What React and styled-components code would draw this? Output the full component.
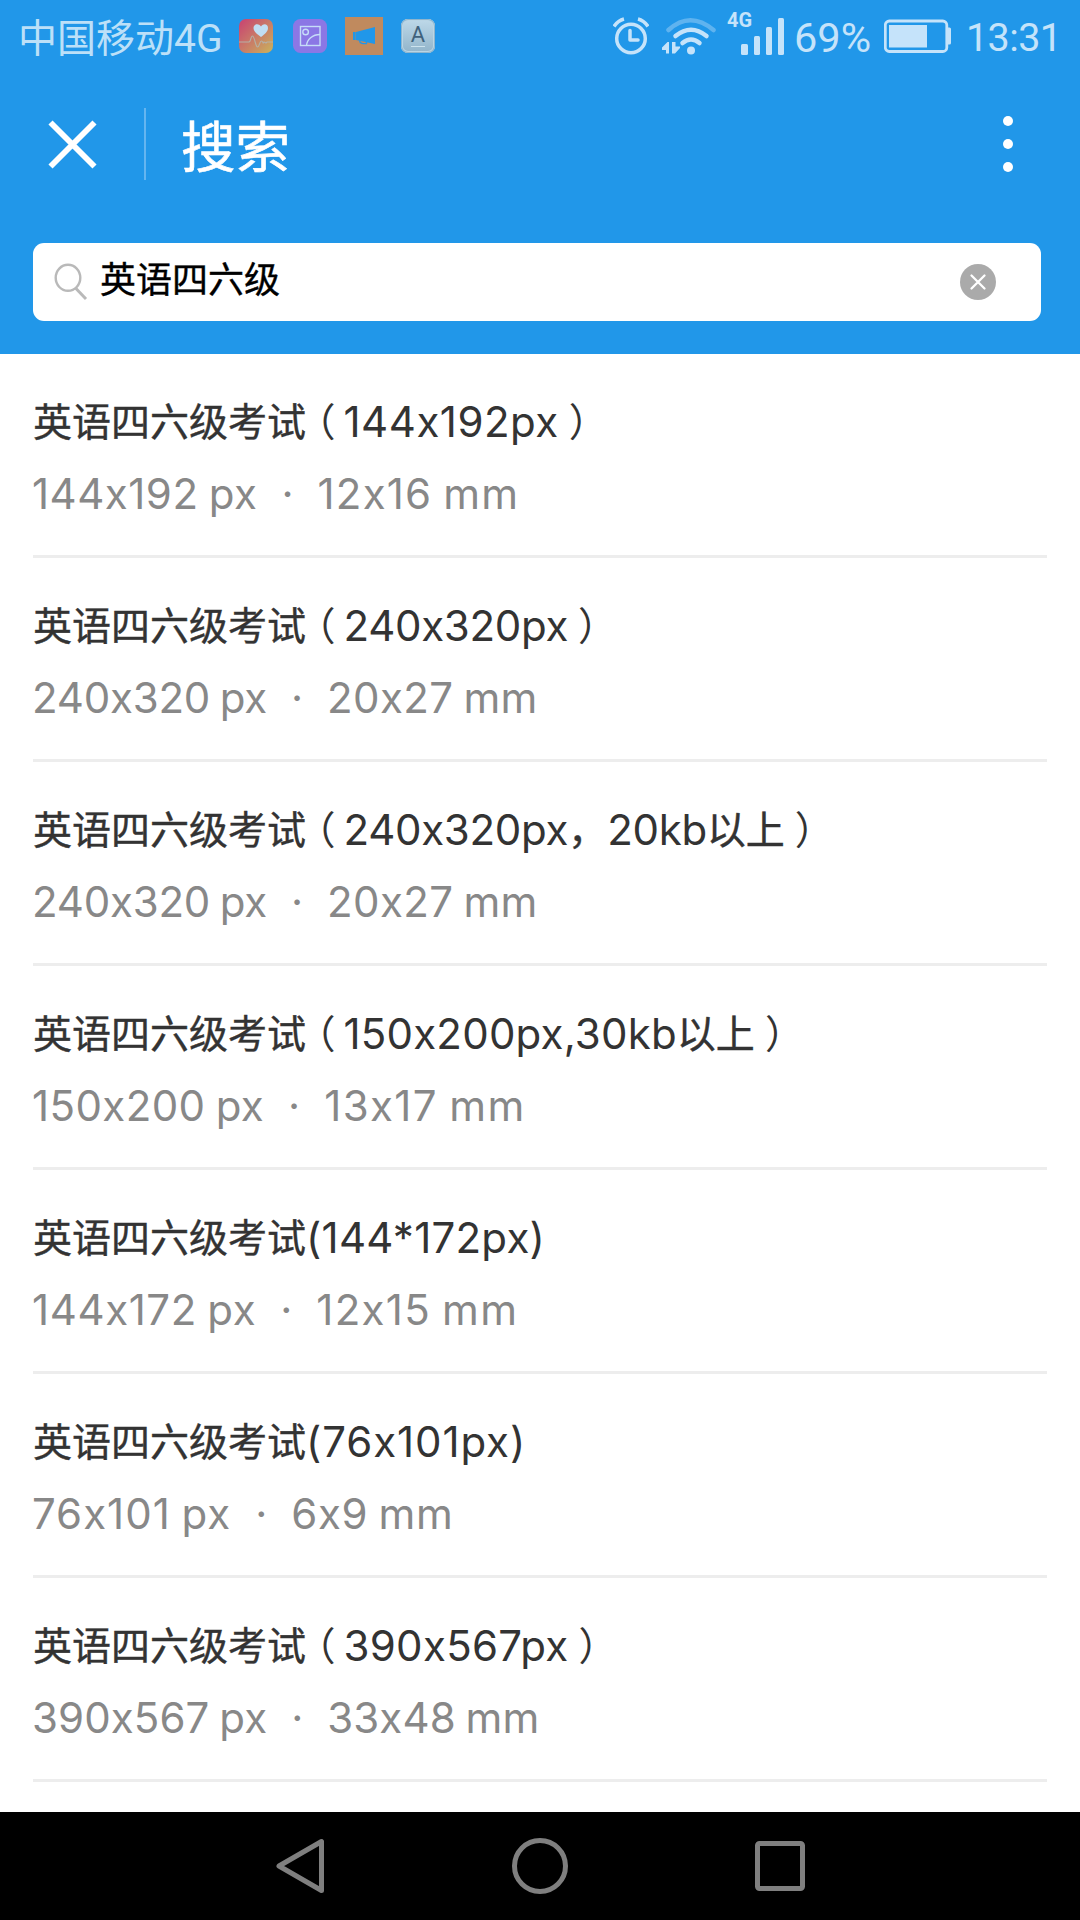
import React from 'react';
import styled, { createGlobalStyle } from 'styled-components';

const cjk = '"Noto Sans CJK SC", sans-serif';
const blue = '#2197e9';

const GlobalStyle = createGlobalStyle`
  * { box-sizing: border-box; }
  body { margin: 0; background: #fdfdfd; font-family: Roboto, ${cjk}; }
`;

const Screen = styled.div`
  width: 1080px;
  height: 1920px;
  display: flex;
  flex-direction: column;
  overflow: hidden;
  background: #fff;
`;

const Header = styled.header`
  flex: none;
  height: 354px;
  background: ${blue};
`;

const StatusBar = styled.div`
  height: 72px;
  display: flex;
  justify-content: space-between;
  padding: 0 21px 0 18px;
  color: #c5e3fa;
`;

const StatusGroup = styled.div`
  display: flex;
  align-items: center;
  height: 72px;
`;

const Carrier = styled.span`
  width: 221px;
  font-size: 39px;
  line-height: 72px;
  padding-top: 5px;
  white-space: nowrap;
  color: #bce0f8;
`;

const StatusText = styled.span`
  width: ${(p) => p.$width}px;
  font-size: ${(p) => p.$size}px;
  line-height: 72px;
  padding-top: 3px;
  white-space: nowrap;
  letter-spacing: ${(p) => p.$spacing || 0}px;
`;

const Glyph = styled.svg`
  display: block;
  flex: none;
  margin-right: ${(p) => p.$after || 0}px;
`;

const Signal = styled.div`
  display: flex;
  align-items: flex-start;
  width: 67px;
  height: 72px;
  padding-top: 10px;
`;

const NetworkType = styled.span`
  width: 14px;
  font-size: 20px;
  font-weight: 700;
  line-height: 20px;
  white-space: nowrap;
`;

const BarsSlot = styled.span`
  padding-top: 8px;
`;

const TitleBar = styled.div`
  height: 144px;
  display: flex;
  align-items: center;
  padding: 0 63px 0 48px;
`;

const Divider = styled.div`
  width: 2px;
  height: 72px;
  margin: 0 35px 0 47px;
  background: #64b5f0;
`;

const PageTitle = styled.h1`
  flex: 1;
  margin: 0;
  font: 400 54.5px/72px ${cjk};
  -webkit-text-stroke: 0.6px #fff;
  color: #fff;
`;

const SearchBox = styled.div`
  display: flex;
  align-items: center;
  width: 1008px;
  height: 78px;
  margin: 27px 0 0 33px;
  padding: 0 45px 0 21px;
  border-radius: 11px;
  background: #fff;
`;

const Query = styled.span`
  flex: 1;
  padding: 0 0 11px 12px;
  font: 400 36px/60px ${cjk};
  -webkit-text-stroke: 0.4px #000;
  color: #000;
`;

const List = styled.ul`
  flex: 1;
  margin: 0;
  padding: 0 33px;
  list-style: none;
  overflow: hidden;
`;

const Item = styled.li`
  height: 204px;
  padding-top: 29px;
  border-bottom: 3px solid #ededed;
`;

const Name = styled.div`
  height: 75px;
  font: 400 39px/72px ${cjk};
  color: #333;
  white-space: nowrap;
`;

const Han = styled.span`
  vertical-align: 1px;
  -webkit-text-stroke: 0.4px #333;
`;

const Latin = styled.span`
  font-family: Inter, sans-serif;
  font-size: 42px;
  font-feature-settings: 'calt' 0;
  letter-spacing: ${(p) => p.$spacing}px;
`;

const OpenParen = styled.span`
  margin: 0 8px 0 10px;
  font-feature-settings: 'halt' 1;
  vertical-align: 1px;
`;

const CloseParen = styled.span`
  margin-left: 10px;
  font-feature-settings: 'halt' 1;
  vertical-align: 1px;
`;

const Size = styled.div`
  display: flex;
  height: 72px;
  margin-left: -1px;
  font: 400 42px/72px Inter, sans-serif;
  font-feature-settings: 'calt' 0;
  word-spacing: -2px;
  color: #888;
  white-space: nowrap;
`;

const Measure = styled.span`
  letter-spacing: ${(p) => p.$spacing}px;
`;

const Dot = styled.span`
  width: 60px;
  text-align: center;
`;

const NavBar = styled.nav`
  flex: none;
  height: 108px;
  display: flex;
  align-items: center;
  justify-content: space-between;
  padding: 0 270px;
  background: #000;
`;

const rows = [
  { open: '（', parts: ['144x192px'], close: '）', px: '144x192 px', mm: '12x16 mm', spacing: [0.5, 0.5, 1.2] },
  { open: '（', parts: ['240x320px'], close: '）', px: '240x320 px', mm: '20x27 mm', spacing: [-0.3, -0.2, 0.35] },
  { open: '（', parts: ['240x320px', '，', '20kb', '以上'], close: '）', px: '240x320 px', mm: '20x27 mm', spacing: [-0.3, -0.2, 0.35] },
  { open: '（', parts: ['150x200px,30kb', '以上'], close: '）', px: '150x200 px', mm: '13x17 mm', spacing: [0.2, 0.4, 1.4] },
  { parts: ['(144*172px)'], px: '144x172 px', mm: '12x15 mm', spacing: [0.25, 0.6, 1.3] },
  { parts: ['(76x101px)'], px: '76x101 px', mm: '6x9 mm', spacing: [0.9, 1, 0.6] },
  { open: '（', parts: ['390x567px'], close: '）', px: '390x567 px', mm: '33x48 mm', spacing: [0.3, 0.1, 0.1] },
];

const HealthIcon = () => (
  <Glyph $after={20} width="34" height="34" viewBox="0 0 34 34">
    <defs>
      <linearGradient id="health" x1="0" y1="0" x2="1" y2="1">
        <stop offset="0.1" stopColor="#c94c70" />
        <stop offset="1" stopColor="#c9b45c" />
      </linearGradient>
    </defs>
    <rect width="34" height="34" rx="7" fill="url(#health)" />
    <path d="M22 18c-4-3-7.5-5.500-7.500-9 0-4 5-5 7.500-1.500C24.500 4 29 5 29 9c0 3.500-3 6-7 9z" fill="#c0def3" />
    <path d="M0 23h10c2 0 1.500-6 3.500-6s3 11 5 11 2-6 4-6 1 4 2.500 1l2 1 1-1h6" fill="none" stroke="#b5b0a5" strokeWidth="1.100" />
  </Glyph>
);

const GalleryIcon = () => (
  <Glyph $after={18} width="34" height="34" viewBox="0 0 34 34">
    <rect width="34" height="34" rx="7.500" fill="#8b77e5" />
    <g fill="none" stroke="#c5dcf8" strokeWidth="1.400">
      <rect x="7.500" y="7.500" width="19.500" height="19" />
      <circle cx="12.600" cy="13" r="2.800" />
      <path d="M13.500 26.500c.5-6 6-11 13.500-11" />
    </g>
  </Glyph>
);

const MegaphoneIcon = () => (
  <Glyph $after={18} width="38" height="38" viewBox="0 0 38 38">
    <rect width="38" height="38" fill="#c08a5e" />
    <path d="M8 15h3L30 10v17l-19-4H8z" fill={blue} />
    <path d="M14.500 23.500c0 3 4 3.500 7 3v-2" fill="none" stroke={blue} strokeWidth="1.300" />
    <path d="M10.500 15v8" stroke="#7191a0" strokeWidth=".7" />
  </Glyph>
);

const LetterBox = styled.span`
  display: flex;
  flex-direction: column;
  align-items: center;
  width: 34px;
  height: 34px;
  padding-top: 4px;
  border-radius: 7px;
  background: linear-gradient(#bed9e9, #91b4ca);
  box-shadow: inset 0 0 0 1px #8eb5ce, inset 0 0 0 2px #bad5e4;
  color: #40627c;
  font: 400 22px/23px Roboto, sans-serif;

  &::after {
    content: '';
    width: 14px;
    height: 1px;
    background: #cce3ee;
  }
`;

const AlarmIcon = () => (
  <Glyph $after={13} width="36" height="38" viewBox="0 0 36 38" fill="none" stroke="currentColor">
    <circle cx="18" cy="21.500" r="14.300" strokeWidth="3.500" />
    <path d="M17 13.500v9.500h8" strokeWidth="3.500" strokeLinecap="round" strokeLinejoin="round" />
    <path d="M1 9.500Q5 3.500 11 2M35 9.500Q31 3.500 25 2" strokeWidth="3.600" />
  </Glyph>
);

const WifiIcon = () => (
  <Glyph $after={10} width="55" height="38" viewBox="0 0 55 38" fill="none" stroke="currentColor" strokeWidth="4.500" strokeLinecap="round">
    <path d="M6.500 13Q28 -6.500 51.500 13" opacity=".38" />
    <path d="M13.500 19Q29 6.500 44.500 19" />
    <path d="M20.500 26Q29 19 37.500 26" />
    <circle cx="29" cy="33.500" r="4" fill="currentColor" stroke="none" />
    <path d="M7 25v11.500H4V33H0v-2.500L5.500 25zM10 25h3.500v4.500H18V31l-5 5.500h-3z" fill="currentColor" stroke="none" />
  </Glyph>
);

const SignalBars = () => (
  <Glyph width="44" height="38" viewBox="0 0 44 38" fill="currentColor">
    <rect x="0" y="26" width="7" height="11" rx="1.500" />
    <rect x="13" y="18" width="6" height="19" rx="1.500" />
    <rect x="25" y="9" width="6" height="28" rx="1.500" />
    <rect x="37" y="0" width="6" height="37" rx="1.500" />
  </Glyph>
);

const BatteryIcon = () => (
  <Glyph $after={15} width="67" height="34" viewBox="0 0 67 34">
    <rect x="1.300" y="2" width="61.500" height="30.500" rx="4" fill="none" stroke="currentColor" strokeWidth="2.800" />
    <rect x="5" y="6" width="38" height="22.500" fill="currentColor" />
    <path d="M64 8.500h1.500q1.500 0 1.500 1.500v14q0 1.500-1.500 1.500H64z" fill="currentColor" />
  </Glyph>
);

export default function App() {
  return (
    <Screen>
      <GlobalStyle />
      <Header>
        <StatusBar>
          <StatusGroup>
            <Carrier>中国移动4G</Carrier>
            <HealthIcon />
            <GalleryIcon />
            <MegaphoneIcon />
            <LetterBox>A</LetterBox>
          </StatusGroup>
          <StatusGroup>
            <AlarmIcon />
            <WifiIcon />
            <Signal>
              <NetworkType>4G</NetworkType>
              <BarsSlot><SignalBars /></BarsSlot>
            </Signal>
            <StatusText $width={90} $size={41.5}>69%</StatusText>
            <BatteryIcon />
            <StatusText $width={93} $size={39.5} $spacing={-0.6}>13:31</StatusText>
          </StatusGroup>
        </StatusBar>
        <TitleBar>
          <Glyph width="49" height="49" viewBox="0 0 49 49" stroke="#fff" strokeWidth="5.800">
            <path d="M2.500 2.500l44 44M46.500 2.500l-44 44" />
          </Glyph>
          <Divider />
          <PageTitle>搜索</PageTitle>
          <Glyph width="18" height="60" viewBox="0 0 18 60" fill="#fff">
            <circle cx="9" cy="7" r="5" />
            <circle cx="9" cy="30" r="5" />
            <circle cx="9" cy="53" r="5" />
          </Glyph>
        </TitleBar>
        <SearchBox>
          <Glyph width="34" height="38" viewBox="0 0 34 38" fill="none" stroke="#b9b9b9" strokeWidth="2.400">
            <ellipse cx="14" cy="14.800" rx="12.300" ry="13" />
            <path d="M21.500 25L32 36" strokeWidth="3" />
          </Glyph>
          <Query>英语四六级</Query>
          <Glyph width="36" height="36" viewBox="0 0 36 36">
            <circle cx="18" cy="18" r="18" fill="#aaa" />
            <path d="M11.500 11.500l13 13M24.500 11.500l-13 13" stroke="#fff" strokeWidth="2.300" strokeLinecap="round" />
          </Glyph>
        </SearchBox>
      </Header>
      <List>
        {rows.map((row, i) => (
          <Item key={i}>
            <Name>
              <Han>英语四六级考试</Han>
              {row.open && <OpenParen>{row.open}</OpenParen>}
              {row.parts.map((part) =>
                /[a-z]/.test(part) ? (
                  <Latin key={part} $spacing={row.spacing[0]}>{part}</Latin>
                ) : (
                  <Han key={part}>{part}</Han>
                )
              )}
              {row.close && <CloseParen>{row.close}</CloseParen>}
            </Name>
            <Size>
              <Measure $spacing={row.spacing[1]}>{row.px}</Measure>
              <Dot>·</Dot>
              <Measure $spacing={row.spacing[2]}>{row.mm}</Measure>
            </Size>
          </Item>
        ))}
      </List>
      <NavBar>
        <Glyph width="60" height="60" viewBox="0 0 60 60" fill="none" stroke="#7f7f7f" strokeWidth="5" strokeLinejoin="round">
          <path d="M51.500 5.500v49L9 30z" />
        </Glyph>
        <Glyph width="60" height="60" viewBox="0 0 60 60" fill="none" stroke="#7f7f7f" strokeWidth="5">
          <circle cx="30" cy="30" r="25.500" />
        </Glyph>
        <Glyph width="60" height="60" viewBox="0 0 60 60" fill="none" stroke="#7f7f7f" strokeWidth="5">
          <rect x="7.500" y="7.500" width="45" height="45" rx="2" />
        </Glyph>
      </NavBar>
    </Screen>
  );
}
